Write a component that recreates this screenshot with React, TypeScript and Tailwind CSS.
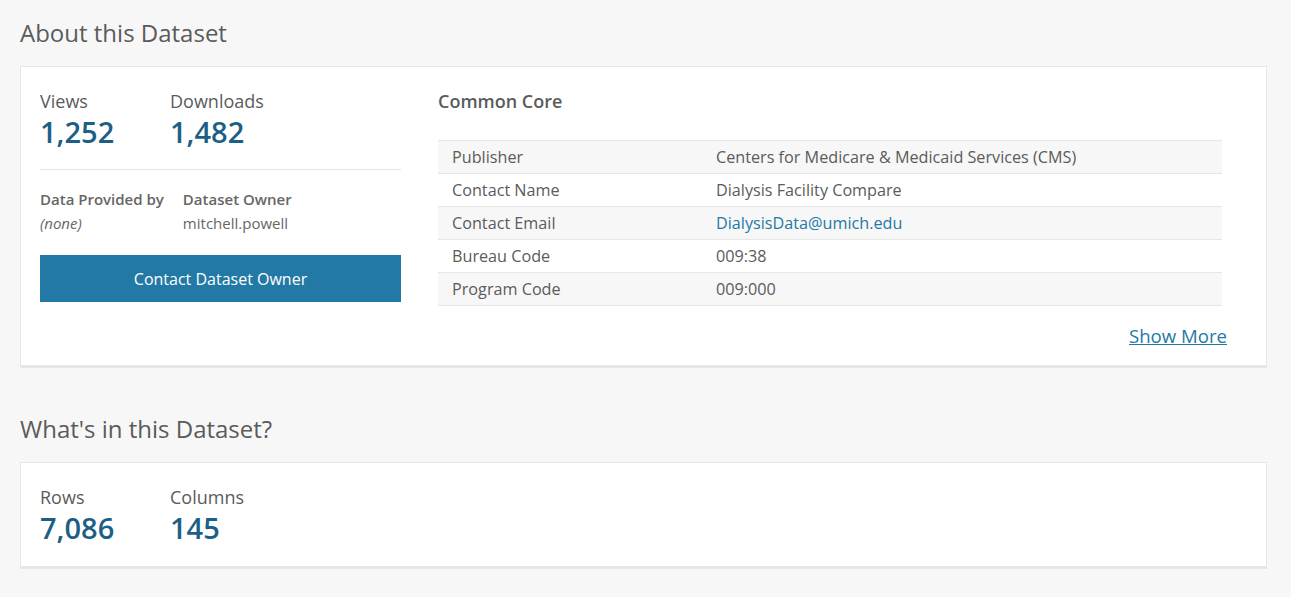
import React from "react";

const rows = [
  { label: "Publisher", value: "Centers for Medicare & Medicaid Services (CMS)" },
  { label: "Contact Name", value: "Dialysis Facility Compare" },
  { label: "Contact Email", value: "DialysisData@umich.edu", link: true },
  { label: "Bureau Code", value: "009:38" },
  { label: "Program Code", value: "009:000" },
];

function Stat({ label, value }: { label: string; value: string }) {
  return (
    <div className="flex w-[130px] flex-col">
      <span className="text-[18px] leading-[24px] text-[#5b5b5b]">{label}</span>
      <span className="text-[29px] leading-[38px] font-semibold text-[#1c5f86]">{value}</span>
    </div>
  );
}

export default function App() {
  return (
    <div
      className="min-h-[597px] bg-[#f7f7f7] pl-5 pr-6 pt-[16px] text-[#5b5b5b]"
      style={{ fontFamily: '"Open Sans", "Liberation Sans", sans-serif' }}
    >
      <h2 className="text-[24px] leading-[34px] text-[#5b5b5b]">About this Dataset</h2>

      <div className="mt-[16px] flex border border-[#e6e6e6] border-b-[3px] bg-white pl-[19px] pt-[22px] pb-[16px]">
        <div className="w-[361px]">
          <div className="flex border-b border-[#e6e6e6] pb-[18px]">
            <Stat label="Views" value="1,252" />
            <Stat label="Downloads" value="1,482" />
          </div>
          <div className="mt-[17px] flex gap-[19px] text-[15px] leading-[24px]">
            <div className="flex flex-col">
              <span className="font-semibold text-[#666]">Data Provided by</span>
              <span className="italic text-[#666]">(none)</span>
            </div>
            <div className="flex flex-col">
              <span className="font-semibold text-[#666]">Dataset Owner</span>
              <span className="text-[#666]">mitchell.powell</span>
            </div>
          </div>
          <button className="mt-[20px] h-[47px] w-full bg-[#2379a6] text-[16px] text-white">
            Contact Dataset Owner
          </button>
        </div>

        <div className="ml-[37px] w-[784px]">
          <h3 className="text-[18px] leading-[24px] font-semibold text-[#5b5b5b]">Common Core</h3>
          <div className="mt-[27px] border-t border-[#e6e6e6]">
            {rows.map((r, i) => (
              <div
                key={r.label}
                className={`flex h-[33px] items-center border-b border-[#e6e6e6] px-[14px] text-[16.2px] ${
                  i % 2 === 0 ? "bg-[#f7f7f7]" : "bg-white"
                }`}
              >
                <span className="w-[264px] text-[#5b5b5b]">{r.label}</span>
                <span className={r.link ? "text-[#2379a6]" : "text-[#5b5b5b]"}>{r.value}</span>
              </div>
            ))}
          </div>
          <div className="mt-[17px] -mr-[5px] flex justify-end">
            <a className="text-[18.6px] leading-[26px] text-[#2379a6] underline">Show More</a>
          </div>
        </div>
      </div>

      <h2 className="mt-[44px] text-[24px] leading-[34px] text-[#5b5b5b]">What's in this Dataset?</h2>

      <div className="mt-[16px] flex border border-[#e6e6e6] border-b-[3px] bg-white pl-[19px] pt-[22px] pb-[19px]">
        <Stat label="Rows" value="7,086" />
        <Stat label="Columns" value="145" />
      </div>
    </div>
  );
}
